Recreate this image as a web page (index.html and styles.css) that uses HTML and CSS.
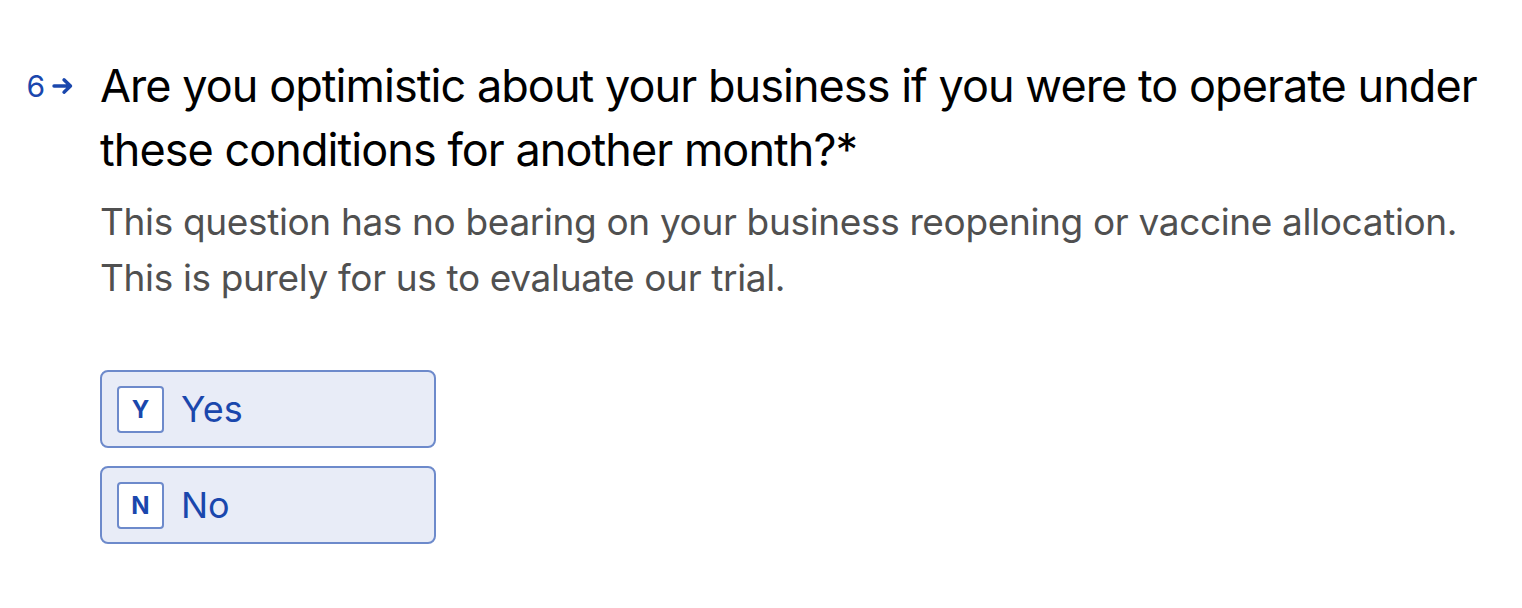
FILE: index.html
```html
<!DOCTYPE html>
<html>
<head>
<meta charset="utf-8">
<link rel="stylesheet" href="styles.css">
</head>
<body>
<div class="question">
  <div class="counter">
    <span class="num">6</span>
    <svg class="arrow" width="22" height="18" viewBox="0 0 22 18"><path d="M2 9H18.5M12 2.8L18.5 9L12 15.2" fill="none" stroke="#1a47ad" stroke-width="3.4" stroke-linecap="round" stroke-linejoin="round"/></svg>
  </div>
  <div class="content">
    <h1 class="title">Are you optimistic about your business if you were to operate under these conditions for another month?*</h1>
    <p class="desc">This question has no bearing on your business reopening or vaccine allocation. This is purely for us to evaluate our trial.</p>
    <div class="choices">
      <div class="choice"><span class="key">Y</span><span class="label">Yes</span></div>
      <div class="choice"><span class="key">N</span><span class="label">No</span></div>
    </div>
  </div>
</div>
</body>
</html>
```
FILE: styles.css
```css
html, body { margin: 0; padding: 0; background: #fff; }
body { font-family: Inter, "Noto Sans", sans-serif; }
.question { display: flex; padding: 54px 0 0 0; }
.counter { width: 100px; display: flex; align-items: center; justify-content: flex-end; gap: 7px; height: 64px; padding-right: 26px; box-sizing: border-box; color: #1a47ad; }
.num { font-size: 30px; line-height: 1; }
.arrow { display: block; }
.content { width: 1400px; }
.title { margin: 0; font-weight: 400; font-size: 45px; line-height: 64px; color: #000; letter-spacing: -0.95px; }
.desc { margin: 12px 0 0; font-size: 37px; line-height: 56px; color: #505050; letter-spacing: -0.35px; }
.choices { margin-top: 64px; display: flex; flex-direction: column; gap: 18px; }
.choice { width: 336px; height: 78px; box-sizing: border-box; border: 2px solid #6d8acb; border-radius: 8px; background: #e8ecf7; display: flex; align-items: center; padding-left: 15px; }
.key { width: 47px; height: 47px; box-sizing: border-box; border: 2px solid #6d8acb; border-radius: 4px; background: #fff; display: flex; align-items: center; justify-content: center; font-size: 24px; font-weight: 700; color: #1a47ad; }
.label { margin-left: 17px; font-size: 36px; color: #1a47ad; }
```
